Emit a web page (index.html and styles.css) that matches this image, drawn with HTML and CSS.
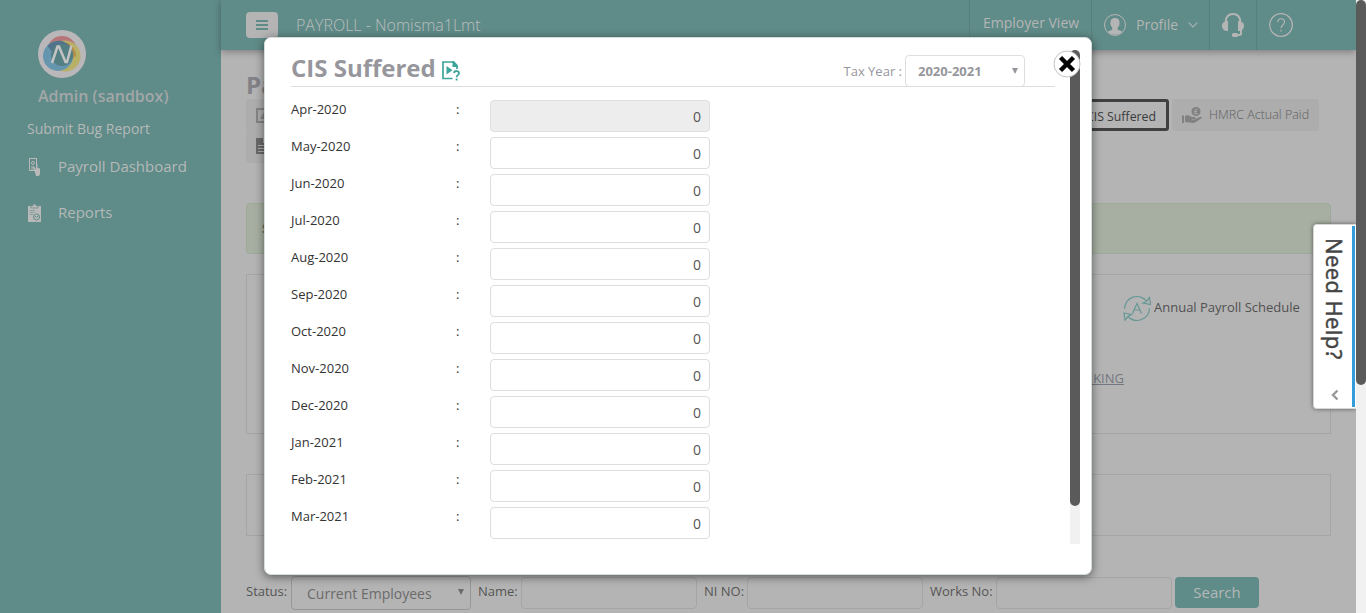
FILE: index.html
```html
<!DOCTYPE html>
<html lang="en">
<head>
<meta charset="utf-8">
<title>Payroll - CIS Suffered</title>
<link rel="stylesheet" href="styles.css">
</head>
<body>
<div class="app">
  <aside class="sidebar">
    <svg class="logo" width="48" height="48" viewBox="0 0 48 48">
      <circle cx="24" cy="24" r="24" fill="#b9b7b9"/>
      <circle cx="24" cy="21" r="15" fill="#b67578"/>
      <circle cx="27" cy="26" r="15.500" fill="#b9b068"/>
      <path d="M28 12a15 15 0 0 1 10 14l-5 3z" fill="#b18d4b"/>
      <circle cx="20" cy="26" r="15" fill="#6695ae"/>
      <path d="M9.500 16a15 15 0 0 1 17-4a15 15 0 0 1 8 17L24 34z" fill="#50728a"/>
      <circle cx="24" cy="25" r="11" fill="#537f83"/>
      <path d="M14 33L19.500 16.500H21L27.500 32H29L33.500 15.500" fill="none" stroke="#c3c3c3" stroke-width="2.500"/>
    </svg>
    <div class="admin">Admin (sandbox)</div>
    <div class="bug">Submit Bug Report</div>
    <nav class="nav">
      <a class="nav-item"><svg width="14" height="18" viewBox="0 0 14 18"><rect x="1.500" y=".5" width="7" height="12" fill="none" stroke="#b9b9b9"/><circle cx="5" cy="5" r="1.500" fill="none" stroke="#b9b9b9"/><path d="M3 9h3M3 11h2" stroke="#b9b9b9"/><path d="M4.500 9l1.500-.5l2 3V6h1.500v4l2.500.5v5.500l-1 2H8L7 14z" fill="#b9b9b9"/></svg><span>Payroll Dashboard</span></a>
      <a class="nav-item"><svg width="14" height="18" viewBox="0 0 14 18"><path d="M0 2h13v16H0z" fill="#b9b9b9"/><path d="M3 1.500h2V0h3v1.500h2V4H3z" fill="#b9b9b9" stroke="#5f8b88" stroke-width=".7"/><path d="M1.500 6.500H7M1.500 8.500H7M1.500 10.500H5" stroke="#8aa09e"/><circle cx="8.500" cy="13" r="3" fill="none" stroke="#5f8b88"/><path d="M7 12l1.500 1.500l2-2" fill="none" stroke="#5f8b88"/></svg><span>Reports</span></a>
    </nav>
  </aside>
  <main class="main">
    <header class="topbar">
      <button class="burger"><svg width="12" height="10" viewBox="0 0 12 10"><path d="M0 1h12M0 5h12M0 9h12" stroke="#5f8b88" stroke-width="2"/></svg></button>
      <span class="brand">PAYROLL - Nomisma1Lmt</span>
      <div class="top-links">
        <div class="cell employer">Employer View</div>
        <div class="cell profile">
          <svg width="22" height="22" viewBox="0 0 22 22"><circle cx="11" cy="11" r="10.500" fill="none" stroke="#b5b5b5"/><path d="M11 4c3 0 4.600 1.800 4.600 5c0 2-.8 3.500-1.800 4.600V16c1.700.5 3.600.7 4.400 2A10.500 10.500 0 0 1 3.800 18c.8-1.300 2.700-1.500 4.400-2v-2.400C7.200 12.500 6.400 11 6.400 9c0-3.200 1.600-5 4.600-5z" fill="#b5b5b5"/></svg>
          <span>Profile</span>
          <svg width="10" height="6" viewBox="0 0 10 6"><path d="M.7.7L5 5L9.300.7" fill="none" stroke="#a9b5b4" stroke-width="1.100"/></svg>
        </div>
        <div class="cell headset"><svg width="22" height="24" viewBox="0 0 22 24"><path d="M3.500 9C4 4 7 1 11 1s7 3 7.500 8M19 16v4.500c0 1-1 1.500-2 1.500h-3" fill="none" stroke="#b5b5b5" stroke-width="2"/><path d="M6 8v10H4.500C-1 17.500-1.500 9.500 3 9l1-1zM16 8v10h1.500c5.500-.5 6-8.500 1.500-9l-1-1z" fill="#b5b5b5"/><rect x="10" y="20" width="6" height="4" rx="1.500" fill="#b5b5b5"/></svg></div>
        <div class="cell question"><svg width="24" height="24" viewBox="0 0 24 24"><circle cx="12" cy="12" r="11.300" fill="none" stroke="#b5b5b5" stroke-width="1.300"/><path d="M8.800 9.200C8.800 4.500 15.500 4.700 15.500 9c0 3-3.500 3-3.500 6.200M12 16.800v1.700" fill="none" stroke="#b5b5b5" stroke-width="1.100"/></svg></div>
      </div>
    </header>
    <section class="content">
      <h1 class="page-title">Pa</h1>
      <div class="actions">
        <div class="left-actions">
          <div class="chip"><svg width="18" height="15" viewBox="0 0 18 15"><path d="M1 1h16v13H1z" fill="none" stroke="#858585" stroke-width="2"/><path d="M4 11l4-7l5 7z" fill="#858585"/></svg></div>
          <div class="chip"><svg width="18" height="16" viewBox="0 0 18 16"><path d="M0 0h7v5h11v11H0z" fill="#696969"/><path d="M2 7.500h12M2 10.500h12M2 13.500h12" stroke="#adadad"/></svg></div>
        </div>
        <div class="right-actions">
          <div class="cis">CIS Suffered</div>
          <div class="hmrc"><svg width="20" height="17" viewBox="0 0 20 17"><circle cx="14" cy="4.500" r="4.500" fill="#818181"/><path d="M15.800 2.800c-1.600-1.200-3-.3-2.600 1.200c.2.800.2 2-.8 2.800h3.500M12 4.600h3" stroke="#b0b0b0" fill="none" stroke-width=".8"/><path d="M0 8.500h2V16H0zM3 9c3-1.500 5 0 6.500 1h3c1.500.2 1.300 2-.2 2H9c2 1 4 .5 5.500-.5l4-1.700c1.300-.2 1.800.8 1 1.500L14 15c-1.500 1-3 1-5 .8L3 15z" fill="#818181"/></svg><span>HMRC Actual Paid</span></div>
        </div>
      </div>
      <div class="notice">S</div>
      <div class="panel schedule">
        <div class="annual"><svg width="28" height="28" viewBox="0 0 28 28"><g fill="none" stroke="#669896" stroke-width="1.200"><path d="M1.500 14A12.500 12.500 0 0 1 24 6.500M26.500 13A12.500 12.500 0 0 1 5 21.500"/><path d="M26.500 2.500l1 7-7.500-1.500l3-1.200zM1 18l7.500 1.500l-3 1.500L2 25z"/><path d="M9.500 18.500L14 8.500l4.500 10M11 15h6"/></g></svg><span>Annual Payroll Schedule</span></div>
        <a class="banking">BANKING</a>
      </div>
      <div class="panel blank"></div>
      <form class="filters">
        <label class="lab">Status:</label><div class="status">Current Employees<i class="tri"></i></div>
        <label class="lab name">Name:</label><div class="box"></div>
        <label class="lab ni">NI NO:</label><div class="box"></div>
        <label class="lab works">Works No:</label><div class="box"></div>
        <button type="button" class="search">Search</button>
      </form>
    </section>
  </main>
  <div class="page-scroll"><div class="page-thumb"></div></div>
</div>

<div class="modal">
  <div class="modal-body">
    <div class="modal-head">
      <h2>CIS Suffered</h2>
      <svg class="help-doc" width="18" height="20" viewBox="0 0 18 20"><path d="M15 8V5.500L11 1H1v16.500h9.500" fill="none" stroke="#3ba59c" stroke-width="1.700"/><path d="M10.500 0v6H16V4.500L12 0z" fill="#3ba59c"/><path d="M4.500 5l6 4.200l-6 4.200z" fill="#3ba59c"/><path d="M12 12.200c.3-3 5-2.800 5 0c0 2-2.400 1.800-2.400 4M14.600 17.500v2" fill="none" stroke="#3ba59c" stroke-width="1.800"/></svg>
      <span class="tax">Tax Year :</span>
      <div class="year">2020-2021<i class="tri"></i></div>
    </div>
    <div class="months">
      <div class="row"><span>Apr-2020</span><span>:</span><div class="field off">0</div></div>
      <div class="row"><span>May-2020</span><span>:</span><div class="field">0</div></div>
      <div class="row"><span>Jun-2020</span><span>:</span><div class="field">0</div></div>
      <div class="row"><span>Jul-2020</span><span>:</span><div class="field">0</div></div>
      <div class="row"><span>Aug-2020</span><span>:</span><div class="field">0</div></div>
      <div class="row"><span>Sep-2020</span><span>:</span><div class="field">0</div></div>
      <div class="row"><span>Oct-2020</span><span>:</span><div class="field">0</div></div>
      <div class="row"><span>Nov-2020</span><span>:</span><div class="field">0</div></div>
      <div class="row"><span>Dec-2020</span><span>:</span><div class="field">0</div></div>
      <div class="row"><span>Jan-2021</span><span>:</span><div class="field">0</div></div>
      <div class="row"><span>Feb-2021</span><span>:</span><div class="field">0</div></div>
      <div class="row"><span>Mar-2021</span><span>:</span><div class="field">0</div></div>
    </div>
  </div>
  <div class="modal-scroll"><div class="modal-thumb"></div></div>
  <svg class="close" width="28" height="28" viewBox="0 0 28 28"><circle cx="14" cy="14" r="13" fill="#fff" stroke="#c4c4c4"/><path d="M7.500 7.500l13 13M20.500 7.500l-13 13" stroke="#000" stroke-width="4.400"/></svg>
</div>

<div class="need-help">
  <span>Need Help?</span>
  <svg width="8" height="12" viewBox="0 0 8 12"><path d="M6.500 1.500L2 6l4.500 4.500" fill="none" stroke="#999" stroke-width="2.400"/></svg>
</div>
</body>
</html>
```
FILE: styles.css
```css
* { box-sizing: border-box; }
body {
  margin: 0;
  width: 1366px;
  height: 613px;
  overflow: hidden;
  position: relative;
  font-family: "Open Sans", sans-serif;
  font-size: 13px;
  background: #b4b4b4;
}
svg { display: block; flex: none; }
span, label { white-space: nowrap; }
.app { display: flex; height: 613px; }

.sidebar { width: 221px; flex: none; background: #5f8b88; color: #b5b9b8; padding-top: 30px; }
.logo { margin-left: 38px; }
.admin { margin: 7px 0 0 38px; font-size: 16px; line-height: 22px; font-weight: 600; color: #a3a7a8; }
.bug { margin: 11px 0 0 27px; font-size: 14px; line-height: 22px; }
.nav { margin-top: 4px; }
.nav-item { display: flex; align-items: center; height: 46px; padding-left: 28px; gap: 16px; font-size: 15px; }
.nav-item span { padding-bottom: 3px; }

.main { width: 1135px; flex: none; }
.topbar {
  height: 50px;
  display: flex;
  align-items: center;
  background: #5f8b88;
  box-shadow: 0 2px 7px rgba(0, 0, 0, .3);
  padding-left: 25px;
}
.burger { width: 32px; height: 26px; border: 0; border-radius: 4px; padding: 0; background: #b4b4b4; display: flex; align-items: center; justify-content: center; }
.brand { margin-left: 18px; font-size: 16px; font-weight: 300; color: #bbbfbe; }
.top-links { display: flex; height: 50px; margin-left: auto; }
.cell { display: flex; align-items: center; border-left: 1px solid #577f7c; color: #b5b5b5; font-size: 14px; }
.employer { width: 122px; padding: 0 0 5px 13px; white-space: nowrap; }
.profile { width: 118px; padding-left: 12px; gap: 10px; }
.profile span { padding-bottom: 1px; }
.headset { width: 47px; padding-left: 12px; }
.question { width: 100px; padding-left: 12px; }

.content { padding: 19px 25px 0; }
.page-title { margin: 0; height: 30px; line-height: 32px; font-size: 24px; color: #828287; }
.actions { display: flex; justify-content: space-between; height: 64px; }
.chip { width: 140px; height: 32px; padding: 9px 10px; background: #adadad; border-radius: 3px; }
.chip + .chip { padding-top: 7px; }
.right-actions { display: flex; gap: 3px; padding-right: 12px; }
.cis { width: 130px; height: 32px; border: 3px solid #404040; border-radius: 3px; padding: 5px 10px 0; text-align: right; color: #3b3b3b; line-height: 20px; font-size: 12.300px; white-space: nowrap; }
.hmrc { width: 147px; height: 32px; background: #adadad; border-radius: 3px; display: flex; align-items: center; gap: 7px; padding-left: 10px; color: #606060; font-weight: 300; font-size: 12.500px; }
.hmrc span { padding-bottom: 2px; }
.notice { margin-top: 40px; height: 51px; border: 1px solid #9eaa99; border-radius: 4px; background: #a7afa2; padding: 15px; color: #68705c; font-weight: 700; }
.panel { border: 1px solid #a5a5a5; }
.schedule { margin-top: 20px; height: 160px; }
.annual { display: flex; align-items: center; gap: 3px; padding: 20px 0 0 876px; color: #515151; height: 47px; }
.annual span { font-size: 13px; padding-bottom: 3px; }
.banking { display: block; width: 877px; text-align: right; margin-top: 47px; color: #737880; text-decoration: underline; }
.blank { margin-top: 40px; height: 62px; }
.filters { display: flex; align-items: flex-start; margin-top: 40px; color: #545454; }
.lab { margin-top: 6px; width: 45px; line-height: 18px; }
.name { margin-left: 7px; width: 43px; }
.ni { margin-left: 7px; width: 43px; }
.works { margin-left: 7px; width: 66px; }
.status { width: 180px; height: 34px; border: 1px solid #989898; border-radius: 4px; padding: 7px 5px 0 15px; display: flex; justify-content: space-between; font-size: 14px; line-height: 20px; color: #6b6b6b; }
.box { width: 176px; height: 32px; margin-top: 1px; border: 1px solid #a5a5a5; border-radius: 4px; }
.search { margin-left: 3px; margin-top: 1px; width: 84px; height: 31px; border: 0; border-radius: 4px; background: #5f8b88; color: #b4b8b8; font: 15px "Open Sans", sans-serif; padding: 0 6px 2px; }
.tri { width: 0; height: 0; margin: 5px 1px 0; border: 3px solid transparent; border-top: 6px solid currentColor; border-bottom: 0; }

.page-scroll { width: 10px; flex: none; background: #f1f1f1; }
.page-thumb { height: 385px; background: #5a5a5a; border-radius: 5px; }

.modal {
  position: absolute;
  left: 264px;
  top: 37px;
  width: 828px;
  height: 538px;
  background: #fff;
  border: 1px solid #d5dddc;
  border-radius: 7px;
  box-shadow: 0 2px 10px rgba(0, 0, 0, .5);
  display: flex;
}
.modal-body { width: 805px; padding: 17px 15px 0 26px; }
.modal-head { display: flex; height: 32px; border-bottom: 1px solid #dedede; color: #96969c; }
.modal-head h2 { margin: 0; font-size: 24px; line-height: 25px; color: #96969c; white-space: nowrap; }
.help-doc { margin: 6px 0 0 6px; }
.tax { margin: 7px 3px 0 auto; line-height: 18px; }
.year { width: 120px; height: 32px; margin-right: 30px; border: 1px solid #dedede; border-radius: 4px; font-weight: 700; line-height: 30px; padding: 0 5px 0 12px; display: flex; justify-content: space-between; }
.year .tri { margin-top: 12px; }
.months { padding-top: 13px; }
.row { display: grid; grid-template-columns: 165px 34px 220px; height: 37px; color: #333; line-height: 18px; }
.field { height: 32px; border: 1px solid #dedede; border-radius: 4px; text-align: right; padding-right: 8px; font-size: 14px; line-height: 32px; color: #555; }
.off { background: #ededed; }
.modal-scroll { width: 10px; height: 494px; margin-top: 12px; background: #f1f1f1; }
.modal-thumb { height: 456px; border-radius: 5px; background: #5a5a5a; }
.close { position: absolute; left: 788px; top: 12px; }

.need-help {
  position: absolute;
  left: 1313px;
  top: 224px;
  width: 43px;
  height: 185px;
  background: linear-gradient(#339cda, #339cda) 38px 1px / 3px 181px no-repeat #fff;
  border: 1px solid #d8d8d8;
  border-right: 0;
  border-radius: 4px 0 0 4px;
  box-shadow: 0 0 4px rgba(0, 0, 0, .5);
  clip-path: inset(-5px 0 -5px -5px);
  padding-top: 13px;
}
.need-help span { writing-mode: vertical-rl; font-size: 22px; letter-spacing: .4px; -webkit-text-stroke: .5px #444; line-height: 41px; height: 140px; display: block; color: #444; }
.need-help svg { margin: 11px 0 0 17px; }
```
